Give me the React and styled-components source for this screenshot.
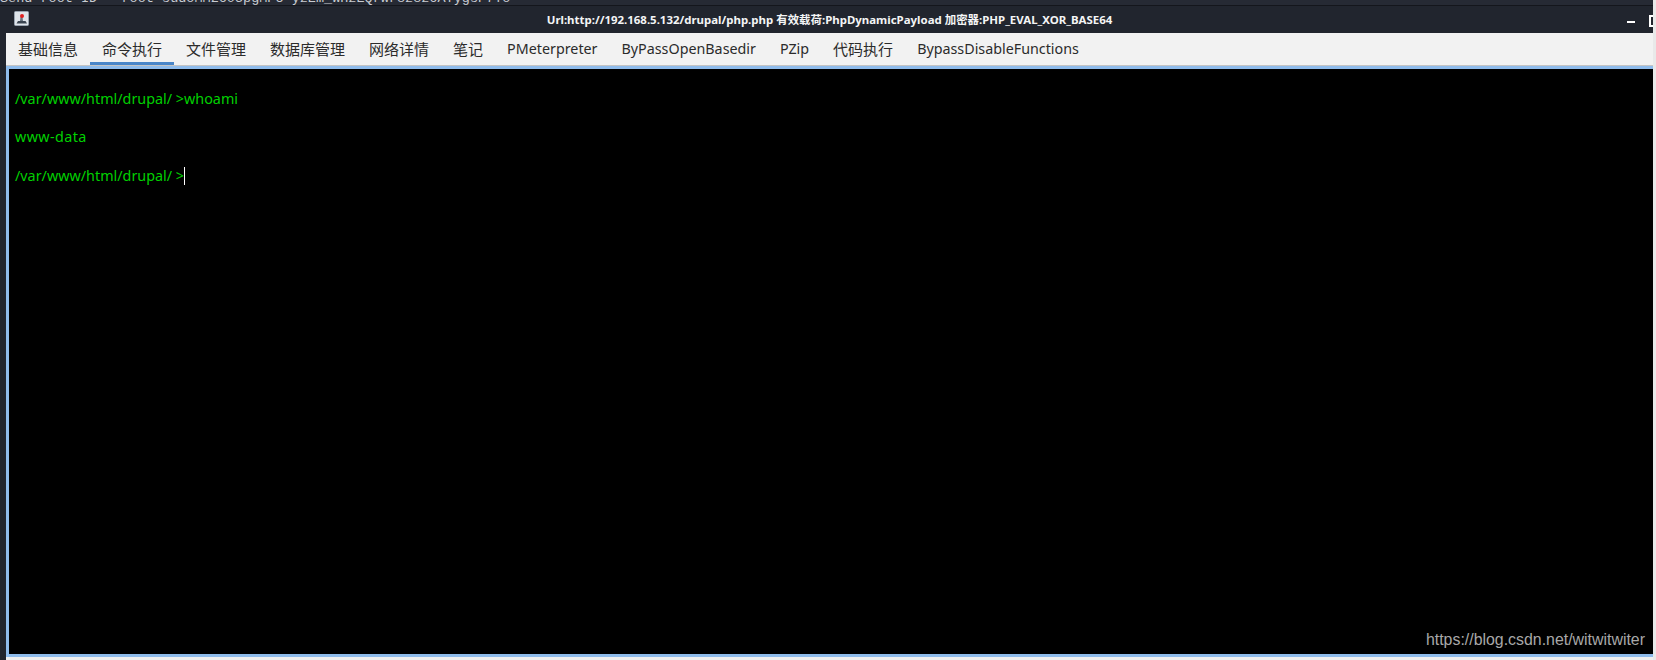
import React from "react";
import styled, { createGlobalStyle } from "styled-components";

const Global = createGlobalStyle`
  html, body { margin: 0; padding: 0; background: #21252e; }
  body { width: 1656px; height: 660px; overflow: hidden; }
`;

const Page = styled.div`
  width: 1656px;
  height: 660px;
  box-sizing: border-box;
  display: flex;
  flex-direction: column;
  background: #21252e;
  border-right: 3px solid #e9e9e9;
  overflow: hidden;
`;

const Strip = styled.div`
  height: 5px;
  flex: none;
  background: #262a34;
  border-bottom: 1px solid #14161c;
  overflow: hidden;
  color: #c9ccd2;
  font: 13.5px/5px "Liberation Mono", monospace;
  white-space: pre;
`;

const StripText = styled.span`
  display: block;
  transform: translateY(-4px);
`;

const Window = styled.div`
  flex: 1;
  min-height: 0;
  display: flex;
  flex-direction: column;
  margin-left: 6px;
  background: #f0f0f0;
`;

const TitleBar = styled.div`
  flex: none;
  height: 27px;
  display: flex;
  align-items: center;
  justify-content: center;
  padding-left: 6px;
  background: #21252e;
  color: #f4f5f6;
  font: 700 11.45px/1 "Noto Sans", "Noto Sans CJK SC", sans-serif;
  position: relative;
`;

const AppIcon = styled.svg`
  position: absolute;
  left: 14px;
  top: 5px;
`;

const WindowControls = styled.div`
  position: absolute;
  right: 0;
  top: 0;
  width: 30px;
  height: 27px;
`;

const MinimizeGlyph = styled.span`
  position: absolute;
  left: 4px;
  top: 15px;
  width: 8px;
  height: 2px;
  background: #fff;
`;

const MaximizeGlyph = styled.span`
  position: absolute;
  left: 26px;
  top: 9px;
  width: 8px;
  height: 8px;
  border: 2px solid #fff;
  border-right-width: 0;
`;

const TabBar = styled.div`
  flex: none;
  height: 32px;
  display: flex;
  align-items: stretch;
  background: #f2f2f2;
  border-bottom: 1px solid #c4c4c4;
  box-sizing: content-box;
`;

const Tab = styled.div`
  display: flex;
  align-items: center;
  padding: 0 12px;
  box-sizing: border-box;
  color: #2b2b2b;
  font: ${(p) => (p.$cjk ? "15px" : "14.3px")}/1 "Noto Sans", "Noto Sans CJK SC", sans-serif;
  border-top: 3px solid transparent;
  border-bottom: 3px solid ${(p) => (p.$active ? "#4a86c8" : "transparent")};
`;

const Terminal = styled.div`
  flex: 1;
  min-height: 0;
  margin-bottom: 3px;
  box-sizing: border-box;
  background: #000;
  border-top: 3px solid #8fbcec;
  border-left: 3px solid #8fbcec;
  border-bottom: 3px solid #8fbcec;
  position: relative;
  padding: 11px 0 0 6px;
  color: #00d000;
  font: 14.35px/38.3px "Noto Sans", sans-serif;
`;

const Line = styled.div`
  height: 38.3px;
  letter-spacing: ${(p) => p.$spacing || 0}px;
`;

const Caret = styled.span`
  display: inline-block;
  width: 1px;
  height: 18px;
  background: #fff;
  vertical-align: -4px;
`;

const Watermark = styled.div`
  position: absolute;
  right: 8px;
  bottom: 6px;
  color: #a8a8a8;
  font: 15.9px/1 "Liberation Sans", Arial, sans-serif;
`;

const tabs = [
  ["基础信息", true],
  ["命令执行", true],
  ["文件管理", true],
  ["数据库管理", true],
  ["网络详情", true],
  ["笔记", true],
  ["PMeterpreter", false],
  ["ByPassOpenBasedir", false],
  ["PZip", false],
  ["代码执行", true],
  ["BypassDisableFunctions", false],
];

export default function App() {
  return (
    <Page>
      <Global />
      <Strip>
        <StripText>{"Send root ID - root sudoMM2605pgMPU-yzEm_WHzEQrWr8z8z6AYygsP7To"}</StripText>
      </Strip>
      <TitleBar>
        <AppIcon width="15" height="15" viewBox="0 0 15 15">
          <rect x="0.5" y="0.5" width="14" height="14" rx="1" fill="#dfe4ea" stroke="#9aa4b0" />
          <path d="M2.5 12.5 4 10h7.5l1.5 2.5z" fill="#3a4450" />
          <path d="M6 10 6.5 6h2L9 10z" fill="#6a7480" />
          <circle cx="8" cy="5" r="2" fill="#e02020" />
        </AppIcon>
        Url:http://192.168.5.132/drupal/php.php 有效载荷:PhpDynamicPayload 加密器:PHP_EVAL_XOR_BASE64
        <WindowControls>
          <MinimizeGlyph />
          <MaximizeGlyph />
        </WindowControls>
      </TitleBar>
      <Window>
        <TabBar>
          {tabs.map(([t, cjk]) => (
            <Tab key={t} $cjk={cjk} $active={t === "命令执行"}>{t}</Tab>
          ))}
        </TabBar>
        <Terminal>
          <Line>/var/www/html/drupal/ &gt;whoami</Line>
          <Line $spacing={0.4}>www-data</Line>
          <Line>/var/www/html/drupal/ &gt;<Caret /></Line>
          <Watermark>https://blog.csdn.net/witwitwiter</Watermark>
        </Terminal>
      </Window>
    </Page>
  );
}
